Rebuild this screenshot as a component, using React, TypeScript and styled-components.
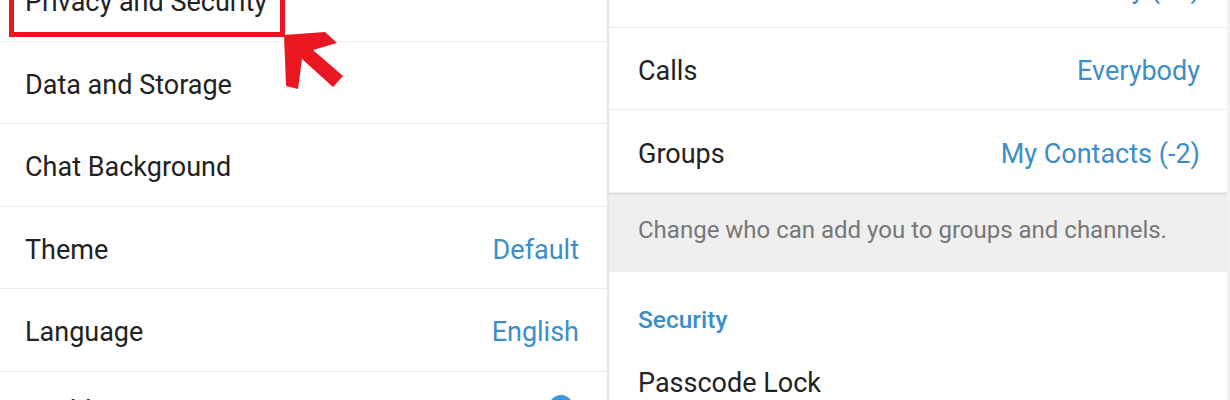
import styled, { createGlobalStyle } from 'styled-components'

const GlobalStyle = createGlobalStyle`
  html, body {
    margin: 0;
    padding: 0;
    background: #ffffff;
    overflow: hidden;
  }
  body {
    font-family: Roboto, "Noto Sans", "Liberation Sans", sans-serif;
    -webkit-font-smoothing: antialiased;
  }
`

const Screen = styled.div`
  position: relative;
  display: flex;
  width: 1230px;
  height: 400px;
  overflow: hidden;
  background: #ffffff;
`

const Pane = styled.div<{ $offset: number; $width?: number }>`
  display: flex;
  flex-direction: column;
  flex: ${p => (p.$width ? `0 0 ${p.$width}px` : '1')};
  margin-top: ${p => p.$offset}px;
  align-self: flex-start;
`

const LeftPane = styled(Pane)`
  border-right: 2px solid #e6e6e6;
`

const RightPane = styled(Pane)`
  border-right: 3px solid #f1f1f1;
`

const Row = styled.div<{ $left: number; $right: number; $tall?: number }>`
  display: flex;
  align-items: center;
  justify-content: space-between;
  box-sizing: border-box;
  height: ${p => p.$tall || 82.5}px;
  padding: 5px ${p => p.$right}px 0 ${p => p.$left}px;
  border-bottom: 1px solid #ececec;
`

const Label = styled.span`
  font-size: 27px;
  color: #222222;
`

const Value = styled.span`
  font-size: 27px;
  color: #3b8ec9;
`

const Hint = styled.div`
  box-sizing: border-box;
  height: 79px;
  padding: 0 29px 6px;
  display: flex;
  align-items: center;
  background: #efefef;
  box-shadow: inset 0 2px 2px -1px #d6d6d6;
  font-size: 24px;
  color: #777777;
`

const SectionTitle = styled.div`
  padding: 34px 29px 6px;
  line-height: 28px;
  font-size: 24.5px;
  font-weight: 500;
  color: #3b8ec9;
`

const ToggleRow = styled(Row)`
  padding-bottom: 8px;
  border-bottom: none;
`

const Track = styled.div`
  position: relative;
  width: 52px;
  height: 18px;
  margin-right: 2px;
  border-radius: 9px;
  background: #c4e0f4;
`

const Knob = styled.div`
  position: absolute;
  right: 4px;
  top: -7px;
  width: 24px;
  height: 24px;
  border-radius: 50%;
  background: #3a96dd;
  box-shadow: 0 1px 2px rgba(0, 0, 0, 0.2);
`

const Highlight = styled.div`
  position: absolute;
  left: 9px;
  top: -40px;
  width: 276px;
  height: 77px;
  box-sizing: border-box;
  border: 5px solid #ea1620;
  pointer-events: none;
`

const Arrow = styled.svg`
  position: absolute;
  left: 0;
  top: 0;
  pointer-events: none;
`

const leftRows = [
  { label: 'Privacy and Security' },
  { label: 'Data and Storage' },
  { label: 'Chat Background' },
  { label: 'Theme', value: 'Default' },
  { label: 'Language', value: 'English' },
]

const privacyRows = [
  { label: 'Last Seen', value: 'Nobody (+1)' },
  { label: 'Calls', value: 'Everybody' },
  { label: 'Groups', value: 'My Contacts (-2)' },
]

const App = () => {
  return (
    <>
      <GlobalStyle />
      <Screen>
        <LeftPane $offset={-41} $width={607}>
          {leftRows.map(r => (
            <Row key={r.label} $left={25} $right={28}>
              <Label>{r.label}</Label>
              {r.value && <Value>{r.value}</Value>}
            </Row>
          ))}
          <ToggleRow $left={25} $right={28}>
            <Label>Enable Animations</Label>
            <Track>
              <Knob />
            </Track>
          </ToggleRow>
        </LeftPane>

        <RightPane $offset={-54}>
          {privacyRows.map((r, i) => (
            <Row key={r.label} $left={29} $right={27} $tall={i === 2 ? 83 : 82}>
              <Label>{r.label}</Label>
              <Value>{r.value}</Value>
            </Row>
          ))}
          <Hint>Change who can add you to groups and channels.</Hint>
          <SectionTitle>Security</SectionTitle>
          <Row $left={29} $right={27} $tall={82}>
            <Label>Passcode Lock</Label>
          </Row>
        </RightPane>

        <Highlight />
        <Arrow width="360" height="100" viewBox="0 0 360 100">
          <polygon
            fill="#ea1620"
            points="284,35 325,32 337,43 313,50 343,76 333,87 302,59 298,89 286,86"
          />
        </Arrow>
      </Screen>
    </>
  )
}

export default App
